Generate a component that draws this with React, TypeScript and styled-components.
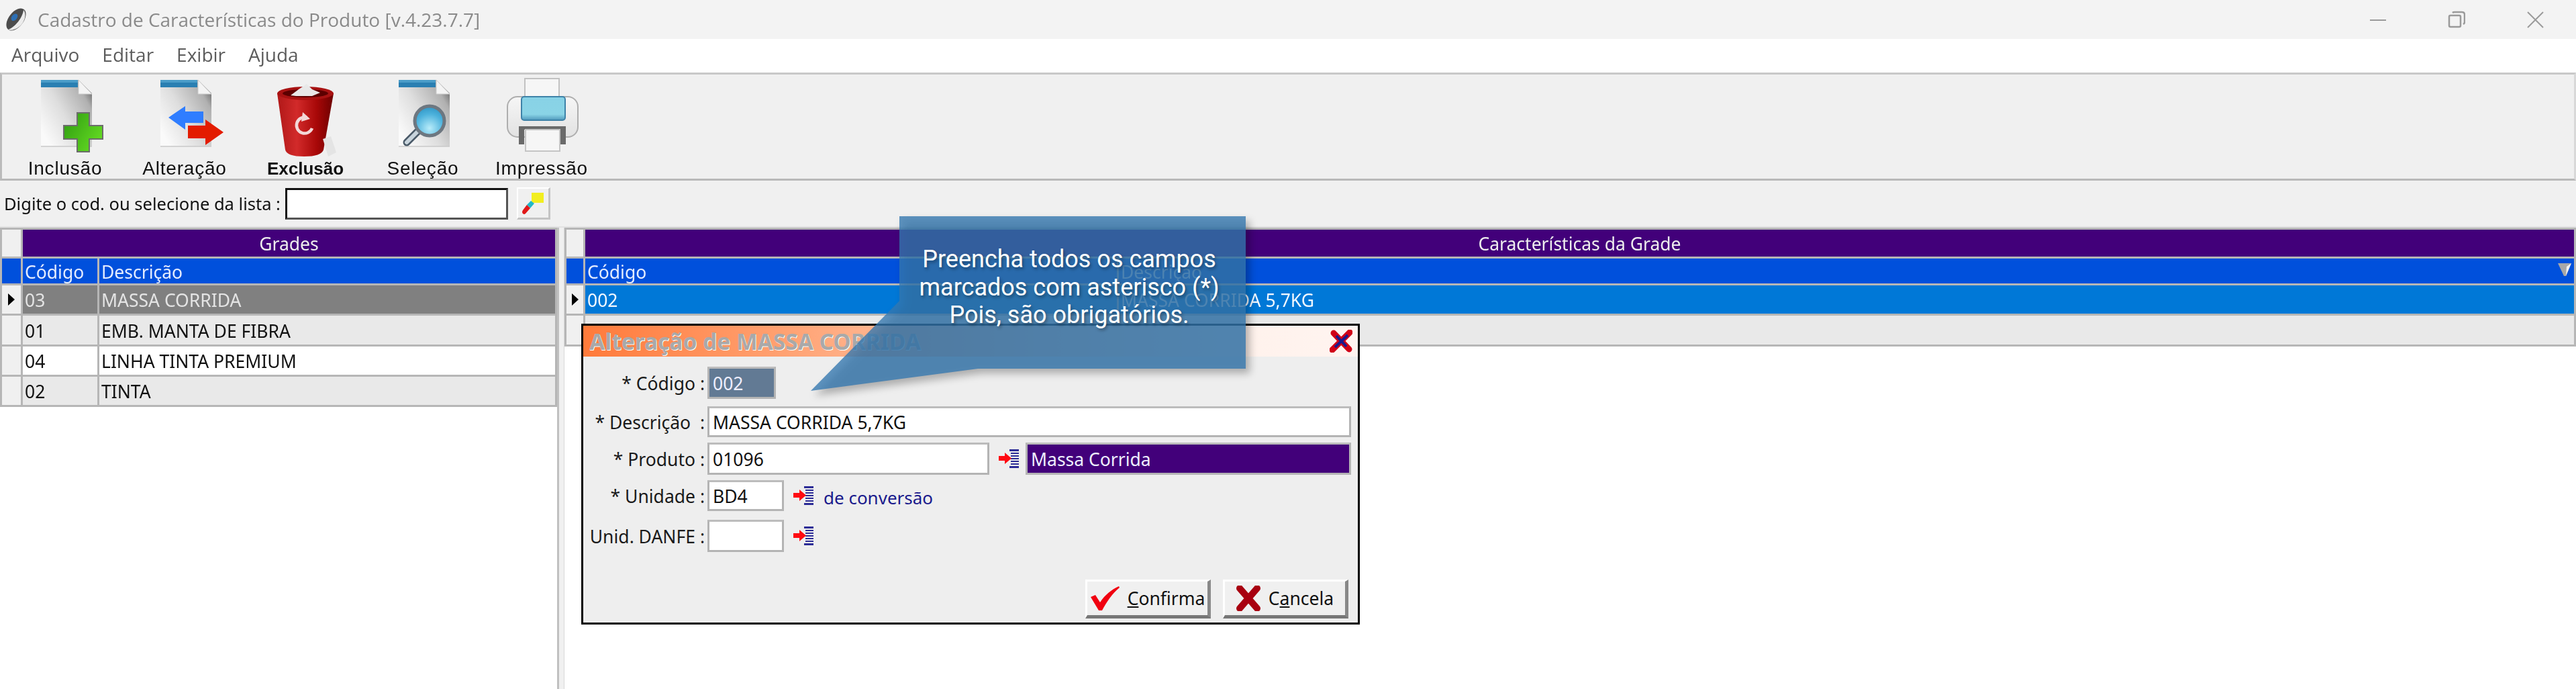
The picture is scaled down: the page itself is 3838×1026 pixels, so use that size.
import React from "react";
import styled, { createGlobalStyle } from "styled-components";

const Global = createGlobalStyle`
  html, body { margin: 0; padding: 0; background: #fff; }
  body { width: 3838px; height: 1026px; overflow: hidden; font-family: "Noto Sans", "Liberation Sans", sans-serif; }
  * { box-sizing: border-box; }
`;

const Stage = styled.div`
  position: relative;
  width: 3838px;
  height: 1026px;
  overflow: hidden;
`;
const Window = styled.div`
  display: flex;
  flex-direction: column;
  width: 100%;
  height: 100%;
  background: #fff;
  filter: blur(0.5px);
`;
const TitleBar = styled.header`
  display: flex;
  align-items: center;
  flex: 0 0 58px;
  background: #f3f3f3;
  padding-left: 6px;
`;
const TitleText = styled.span`
  margin-left: 14px;
  font: 28px "Open Sans", sans-serif;
  color: #8a8a8a;
  flex: 1;
`;
const WinButton = styled.span`
  display: flex;
  align-items: center;
  justify-content: center;
  width: 117px;
  height: 58px;
  margin-right: ${(p: { $mr?: number }) => p.$mr ?? 0}px;
`;
const MenuBar = styled.nav`
  display: flex;
  align-items: center;
  flex: 0 0 46px;
  margin-bottom: 4px;
  background: #fff;
  padding-left: 17px;
  gap: 34px;
`;
const MenuItem = styled.span`
  font: 28px "Open Sans", sans-serif;
  color: #5c5c5c;
`;
const Toolbar = styled.div`
  display: grid;
  grid-template-columns: 178px 178px 182px 168px 186px;
  flex: 0 0 160px;
  padding-left: 5px;
  background: #f0f0f0;
  border: 3px solid #b9b9b9;
  border-top-color: #c8c8c8;
  border-right-color: #d8d8d8;
  border-left-color: #bbb;
`;
const ToolItem = styled.div`
  display: flex;
  flex-direction: column;
  align-items: center;
  padding-top: 4px;
`;
const ToolLabel = styled.span<{ $bold?: boolean }>`
  font: ${(p) => (p.$bold ? "bold 26px" : "normal 28px")}/30px "Liberation Sans", sans-serif;
  letter-spacing: ${(p) => (p.$bold ? 0 : 0.8)}px;
  color: #111;
  white-space: nowrap;
  margin-top: 1px;
`;
const SearchRow = styled.div`
  display: flex;
  align-items: center;
  flex: 0 0 70px;
  background: #f0f0f0;
  padding: 0 0 0 6px;
  border-bottom: 2px solid #e2e2e2;
`;
const SearchLabel = styled.span`
  flex: 0 0 419px;
  font: 25.5px "Noto Sans", sans-serif;
  color: #111;
  white-space: nowrap;
`;
const SearchInput = styled.div`
  width: 332px;
  height: 47px;
  background: #fff;
  border: 3px solid #111;
  border-bottom-color: #555;
  border-right-color: #555;
`;
const PickButton = styled.div`
  display: flex;
  align-items: center;
  justify-content: center;
  width: 50px;
  height: 48px;
  margin-left: 13px;
  background: #f0f0f0;
  border-right: 3px solid #c4c4c4;
  border-bottom: 3px solid #c4c4c4;
  border-top: 2px solid #fff;
  border-left: 2px solid #fff;
`;
const Panels = styled.main`
  display: grid;
  grid-template-columns: 830px 11px 1fr;
  flex: 1;
  background: #fff;
`;
const Splitter = styled.div`
  background: #f0f0f0;
  border-left: 3px solid #c0c0c0;
  border-right: 1px solid #d8d8d8;
`;
const GridTable = styled.div<{ $cols: string }>`
  display: grid;
  grid-template-columns: ${(p) => p.$cols};
  gap: 3px;
  padding: 3px;
  background: #b6b6b6;
  align-self: start;
`;
type CellKind = "title" | "head" | "selGray" | "selBlue" | "odd" | "even";
const cellBg: Record<CellKind, string> = {
  title: "#42007a",
  head: "#0050dc",
  selGray: "#808080",
  selBlue: "#0078d7",
  odd: "#e9e9e9",
  even: "#fff",
};
const cellFg: Record<CellKind, string> = {
  title: "#eee",
  head: "#e4ecff",
  selGray: "#e4e4e4",
  selBlue: "#f2f8ff",
  odd: "#111",
  even: "#111",
};
const Cell = styled.div<{ $k: CellKind; $h: number }>`
  position: relative;
  display: flex;
  align-items: center;
  height: ${(p) => p.$h}px;
  padding: 2px 0 0 3px;
  font: 26.5px "Noto Sans", sans-serif;
  white-space: nowrap;
  overflow: hidden;
  background: ${(p) => cellBg[p.$k]};
  color: ${(p) => cellFg[p.$k]};
`;
const TitleCell = styled(Cell)`
  grid-column: 2 / -1;
  justify-content: center;
  padding-left: 0;
`;
const Indicator = styled.div<{ $h: number; $head?: boolean }>`
  display: flex;
  align-items: center;
  justify-content: center;
  height: ${(p) => p.$h}px;
  background: ${(p) => (p.$head ? "#0050dc" : "#f0f0f0")};
`;
const Marker = styled.span`
  width: 0;
  height: 0;
  border-top: 9px solid transparent;
  border-bottom: 9px solid transparent;
  border-left: 10px solid #000;
`;
const FilterMark = styled.svg`
  position: absolute;
  right: 3px;
  top: 6px;
`;

const Dialog = styled.section`
  position: absolute;
  left: 866px;
  top: 482px;
  width: 1160px;
  height: 448px;
  display: flex;
  flex-direction: column;
  background: #eee;
  border: 3px solid #000;
`;
const DialogBar = styled.div`
  display: flex;
  align-items: center;
  justify-content: space-between;
  flex: 0 0 44px;
  padding: 0 8px 0 9px;
  background: linear-gradient(90deg, #ff7a3a 0%, #ffa070 25%, #ffd8c4 60%, #fff2ec 85%, #fff4f0 100%);
`;
const DialogTitle = styled.span`
  font: bold 33.5px "Noto Sans", sans-serif;
  color: #a9a9a9;
  text-shadow: 1px 1px 0 #fff;
`;
const FormArea = styled.div`
  display: flex;
  flex-direction: column;
  flex: 1;
  padding-top: 15px;
`;
const FormRow = styled.div<{ $mb: number }>`
  display: flex;
  align-items: center;
  margin-bottom: ${(p) => p.$mb}px;
`;
const FieldLabel = styled.label`
  flex: 0 0 185px;
  padding: 2px 4px 0 0;
  text-align: right;
  font: 26.5px "Noto Sans", sans-serif;
  color: #1a1a1a;
  white-space: pre;
`;
const Field = styled.div<{ $w: number; $h: number; $k?: "dim" | "dark" }>`
  display: flex;
  align-items: center;
  flex: 0 0 ${(p) => p.$w}px;
  height: ${(p) => p.$h}px;
  padding: 2px 0 0 5px;
  font: 26.5px "Noto Sans", sans-serif;
  white-space: nowrap;
  border: 3px solid #b4b4b4;
  border-top-color: #bcbcbc;
  background: ${(p) => (p.$k === "dim" ? "#627a94" : p.$k === "dark" ? "#42007a" : "#fff")};
  color: ${(p) => (p.$k ? "#eef" : "#111")};
`;
const LookupIcon = styled.svg<{ $mr?: number }>`
  flex: none;
  margin: 0 ${(p) => p.$mr ?? 10}px 0 14px;
`;
const HintText = styled.span`
  margin-top: 6px;
  font: 26px "Noto Sans", sans-serif;
  color: #1a1a8c;
`;
const Actions = styled.div`
  display: flex;
  justify-content: flex-end;
  gap: 18px;
  margin-top: 41px;
  padding-right: 14px;
`;
const ActionButton = styled.button`
  display: flex;
  align-items: center;
  justify-content: center;
  gap: 12px;
  width: 187px;
  height: 58px;
  padding: 0;
  background: #f0f0f0;
  font: 26.5px "Noto Sans", sans-serif;
  color: #111;
  border-style: solid;
  border-width: 3px 5px 5px 3px;
  border-color: #fff #888 #777 #fff;
`;

const Callout = styled.aside`
  position: absolute;
  left: 1208px;
  top: 322px;
  width: 648px;
  height: 260px;
`;
const CalloutShape = styled.svg`
  position: absolute;
  inset: 0;
  overflow: visible;
  filter: drop-shadow(6px 7px 6px rgba(0, 0, 0, 0.35));
`;
const CalloutText = styled.p`
  position: relative;
  margin: 44px 0 0 127px;
  width: 516px;
  text-align: center;
  font: 36px/41.5px Roboto, sans-serif;
  color: #fff;
  text-shadow: 2px 3px 4px rgba(0, 0, 0, 0.35);
`;

const DocShape = ({ id }: { id: string }) => (
  <>
    <defs>
      <linearGradient id={id} x1="1" y1="0" x2="0" y2="0.75">
        <stop offset="0" stopColor="#4a4a4a" />
        <stop offset="0.22" stopColor="#b0b0b0" />
        <stop offset="0.6" stopColor="#dedede" />
        <stop offset="1" stopColor="#fafafa" />
      </linearGradient>
    </defs>
    <path d="M24 4H80L100 24V103H24Z" fill={`url(#${id})`} />
    <path d="M24 103H100" stroke="#c8c8c8" strokeWidth="1.5" />
    <path d="M24 4H79V15H24Z" fill="#2a7fb2" />
    <path d="M24 4H79V8H24Z" fill="#4a9cc8" />
    <path d="M80 4L100 25H80Z" fill="#f4f4f4" stroke="#ccc" strokeWidth="1" />
  </>
);

const IconInclusao = () => (
  <svg width="120" height="120" viewBox="0 0 120 120">
    <DocShape id="d1" />
    <defs>
      <linearGradient id="g1" x1="0" y1="0" x2="1" y2="0.6">
        <stop offset="0" stopColor="#2d9a10" />
        <stop offset="1" stopColor="#62d822" />
      </linearGradient>
    </defs>
    <path d="M78 53H96V72H116V92H96V111H78V92H58V72H78Z" fill="url(#g1)" stroke="#6c6c6c" strokeWidth="2" />
  </svg>
);
const IconAlteracao = () => (
  <svg width="120" height="120" viewBox="0 0 120 120">
    <DocShape id="d2" />
    <path d="M36 60L61 43V51H88V68H61V78Z" fill="#2f7dff" />
    <path d="M118 82L91 63V72H65V91H91V101Z" fill="#e31c00" />
  </svg>
);
const IconExclusao = () => (
  <svg width="120" height="120" viewBox="0 0 120 120">
    <defs>
      <linearGradient id="t1" x1="0" y1="0" x2="1" y2="0">
        <stop offset="0" stopColor="#b01818" />
        <stop offset="0.35" stopColor="#d22a2a" />
        <stop offset="0.7" stopColor="#a80808" />
        <stop offset="1" stopColor="#6c0000" />
      </linearGradient>
    </defs>
    <path d="M18 24L30 108Q32 118 58 118Q84 118 87 108L102 24Z" fill="url(#t1)" />
    <ellipse cx="60" cy="24" rx="42" ry="10" fill="#a81212" />
    <ellipse cx="60" cy="24" rx="34" ry="6" fill="#5c0000" />
    <path d="M38 27L50 18L62 10L70 18L82 23L70 28H46Z" fill="#e8e8e8" />
    <path d="M62 60A12 12 0 1 0 70 76" fill="none" stroke="#f3d8d8" strokeWidth="4.5" />
    <path d="M56 52L67 62L54 66Z" fill="#f3d8d8" />
    <path d="M86 92L98 88L106 112L94 118Z" fill="#e4e4e4" />
  </svg>
);
const IconSelecao = () => (
  <svg width="120" height="120" viewBox="0 0 120 120">
    <DocShape id="d4" />
    <defs>
      <radialGradient id="m1" cx="0.5" cy="0.75" r="0.8">
        <stop offset="0" stopColor="#b8ecfa" />
        <stop offset="0.6" stopColor="#4db2dc" />
        <stop offset="1" stopColor="#2a8fc0" />
      </radialGradient>
    </defs>
    <path d="M36 97L52 81" stroke="#4a5a68" strokeWidth="11" strokeLinecap="round" />
    <path d="M36 97L52 81" stroke="#c8d4dc" strokeWidth="6" strokeLinecap="round" />
    <circle cx="70" cy="65" r="22" fill="url(#m1)" stroke="#6d7780" strokeWidth="5" />
  </svg>
);
const IconImpressao = () => (
  <svg width="120" height="120" viewBox="0 0 120 120">
    <defs>
      <linearGradient id="p1" x1="0" y1="0" x2="0" y2="1">
        <stop offset="0" stopColor="#f6f6f6" />
        <stop offset="1" stopColor="#e2e2e2" />
      </linearGradient>
      <linearGradient id="p2" x1="0" y1="0" x2="0" y2="1">
        <stop offset="0" stopColor="#88d2e6" />
        <stop offset="0.75" stopColor="#8ad4e6" />
        <stop offset="1" stopColor="#4f98bb" />
      </linearGradient>
    </defs>
    <rect x="35" y="2" width="51" height="30" fill="#f6f6f6" stroke="#c2c2c2" strokeWidth="2" />
    <rect x="9" y="29" width="105" height="60" rx="15" fill="url(#p1)" stroke="#aeaeae" strokeWidth="2" />
    <rect x="30" y="29" width="65" height="35" rx="4" fill="url(#p2)" stroke="#3d82a8" strokeWidth="2" />
    <path d="M26 73H96V100H88V78H34V100H26Z" fill="#6a6a6a" />
    <rect x="36" y="78" width="51" height="32" fill="#f6f6f6" stroke="#c4c4c4" strokeWidth="2" />
  </svg>
);
const IconLookup = ({ mr }: { mr?: number }) => (
  <LookupIcon $mr={mr} width="30" height="30" viewBox="0 0 30 30">
    <path d="M16 1H30V4H16ZM18 6H30V8H18ZM18 10H30V12H18ZM18 14H30V16H18ZM18 18H30V20H18ZM18 22H30V24H18ZM16 26H30V29H16Z" fill="#2c2c96" />
    <path d="M0 11H9V6L19 14.5L9 23V18H0Z" fill="#ff0a12" />
  </LookupIcon>
);

const Logo = () => (
  <svg width="36" height="36" viewBox="0 0 36 36">
    <g transform="rotate(38 18 18)">
      <ellipse cx="18" cy="18" rx="11" ry="19" fill="#4c4c4c" />
      <path d="M18 0C26 2 29 12 29 18C29 26 24 36 18 37C24 28 24 10 18 0Z" fill="#ececec" />
      <ellipse cx="14" cy="17" rx="4" ry="6" fill="#2d6fb4" />
    </g>
  </svg>
);

const tableLeft = "28px 111px 1fr";
const tableRight = "25px 792px 1fr";
const leftRows: [string, string, CellKind, number][] = [
  ["03", "MASSA CORRIDA", "selGray", 42],
  ["01", "EMB. MANTA DE FIBRA", "odd", 43],
  ["04", "LINHA TINTA PREMIUM", "even", 42],
  ["02", "TINTA", "odd", 42],
];

export default function App() {
  return (
    <Stage>
      <Global />
      <Window>
        <TitleBar>
          <Logo />
          <TitleText>Cadastro de Características do Produto [v.4.23.7.7]</TitleText>
          <WinButton>
            <svg width="26" height="26" viewBox="0 0 26 26"><path d="M1 14H25" stroke="#9a9a9a" strokeWidth="2" /></svg>
          </WinButton>
          <WinButton>
            <svg width="26" height="26" viewBox="0 0 26 26" fill="none" stroke="#9a9a9a" strokeWidth="2.5"><rect x="2" y="7" width="17" height="17" rx="2" /><path d="M7 3Q8 2 10 2H21Q25 2 25 6V17Q25 19 23 20" /></svg>
          </WinButton>
          <WinButton $mr={3}>
            <svg width="26" height="26" viewBox="0 0 26 26"><path d="M2 2L25 25M25 2L2 25" stroke="#9a9a9a" strokeWidth="2" /></svg>
          </WinButton>
        </TitleBar>
        <MenuBar>
          <MenuItem>Arquivo</MenuItem>
          <MenuItem>Editar</MenuItem>
          <MenuItem>Exibir</MenuItem>
          <MenuItem>Ajuda</MenuItem>
        </MenuBar>
        <Toolbar>
          <ToolItem><IconInclusao /><ToolLabel>Inclusão</ToolLabel></ToolItem>
          <ToolItem><IconAlteracao /><ToolLabel>Alteração</ToolLabel></ToolItem>
          <ToolItem><IconExclusao /><ToolLabel $bold>Exclusão</ToolLabel></ToolItem>
          <ToolItem><IconSelecao /><ToolLabel>Seleção</ToolLabel></ToolItem>
          <ToolItem><IconImpressao /><ToolLabel>Impressão</ToolLabel></ToolItem>
        </Toolbar>
        <SearchRow>
          <SearchLabel>Digite o cod. ou selecione da lista :</SearchLabel>
          <SearchInput />
          <PickButton>
            <svg width="44" height="42" viewBox="0 0 44 42">
              <path d="M19 5H37V20H19Z" fill="#f2ee20" />
              <path d="M18 17L23 21L17 28L12 23Z" fill="#20b8c8" />
              <path d="M12 23L17 28L10 36Q8 38 6 36Q4 34 6 31Z" fill="#e01818" />
            </svg>
          </PickButton>
        </SearchRow>
        <Panels>
          <div>
            <GridTable $cols={tableLeft}>
              <Indicator $h={40} />
              <TitleCell $k="title" $h={40}>Grades</TitleCell>
              <Indicator $h={37} $head />
              <Cell $k="head" $h={37}>Código</Cell>
              <Cell $k="head" $h={37}>Descrição</Cell>
              {leftRows.map(([code, name, kind, h], i) => (
                <React.Fragment key={code}>
                  <Indicator $h={h}>{i === 0 && <Marker />}</Indicator>
                  <Cell $k={kind} $h={h}>{code}</Cell>
                  <Cell $k={kind} $h={h}>{name}</Cell>
                </React.Fragment>
              ))}
            </GridTable>
          </div>
          <Splitter />
          <div>
            <GridTable $cols={tableRight}>
              <Indicator $h={40} />
              <TitleCell $k="title" $h={40}>Características da Grade</TitleCell>
              <Indicator $h={37} $head />
              <Cell $k="head" $h={37}>Código</Cell>
              <Cell $k="head" $h={37}>
                Descrição
                <FilterMark width="22" height="22" viewBox="0 0 22 22">
                  <path d="M1 1H21L13 20H10Z" fill="#a8a8a8" />
                  <path d="M14 6L21 1L13 20Z" fill="#f2f2f2" />
                </FilterMark>
              </Cell>
              <Indicator $h={42}><Marker /></Indicator>
              <Cell $k="selBlue" $h={42}>002</Cell>
              <Cell $k="selBlue" $h={42}>MASSA CORRIDA 5,7KG</Cell>
              <Indicator $h={43} />
              <Cell $k="odd" $h={43} />
              <Cell $k="odd" $h={43} />
            </GridTable>
          </div>
        </Panels>
      </Window>
      <Dialog>
        <DialogBar>
          <DialogTitle>Alteração de MASSA CORRIDA</DialogTitle>
          <svg width="34" height="34" viewBox="0 0 34 34">
            <path d="M4 30L30 4M6 5L29 29" stroke="#d00018" strokeWidth="9" strokeLinecap="round" />
            <path d="M8 26L27 8M10 9L25 25" stroke="#1a1a8c" strokeWidth="4" />
          </svg>
        </DialogBar>
        <FormArea>
          <FormRow $mb={11}>
            <FieldLabel>* Código :</FieldLabel>
            <Field $w={102} $h={48} $k="dim">002</Field>
          </FormRow>
          <FormRow $mb={8}>
            <FieldLabel>* Descrição  :</FieldLabel>
            <Field $w={959} $h={46}>MASSA CORRIDA 5,7KG</Field>
          </FormRow>
          <FormRow $mb={8}>
            <FieldLabel>* Produto :</FieldLabel>
            <Field $w={420} $h={48}>01096</Field>
            <IconLookup />
            <Field $w={485} $h={48} $k="dark">Massa Corrida</Field>
          </FormRow>
          <FormRow $mb={13}>
            <FieldLabel>* Unidade :</FieldLabel>
            <Field $w={114} $h={46}>BD4</Field>
            <IconLookup mr={15} />
            <HintText>de conversão</HintText>
          </FormRow>
          <FormRow $mb={0}>
            <FieldLabel>Unid. DANFE :</FieldLabel>
            <Field $w={114} $h={48} />
            <IconLookup />
          </FormRow>
          <Actions>
            <ActionButton type="button">
              <svg width="44" height="38" viewBox="0 0 44 38">
                <path d="M1 17L8 14L15 25C22 14 32 6 43 1L44 3C33 12 25 24 18 37H13Z" fill="#f00010" />
              </svg>
              <span><u>C</u>onfirma</span>
            </ActionButton>
            <ActionButton type="button">
              <svg width="36" height="38" viewBox="0 0 36 38">
                <path d="M5 4L31 34M31 4L5 34" stroke="#a80010" strokeWidth="10" strokeLinecap="round" />
              </svg>
              <span>C<u>a</u>ncela</span>
            </ActionButton>
          </Actions>
        </FormArea>
      </Dialog>
      <Callout>
        <CalloutShape width="648" height="260" viewBox="0 0 648 260">
          <path d="M132 0H648V227H249L0 260L132 126Z" fill="rgba(52,119,175,0.79)" />
        </CalloutShape>
        <CalloutText>
          Preencha todos os campos
          <br />
          marcados com asterisco (*)
          <br />
          Pois, são obrigatórios.
        </CalloutText>
      </Callout>
    </Stage>
  );
}
